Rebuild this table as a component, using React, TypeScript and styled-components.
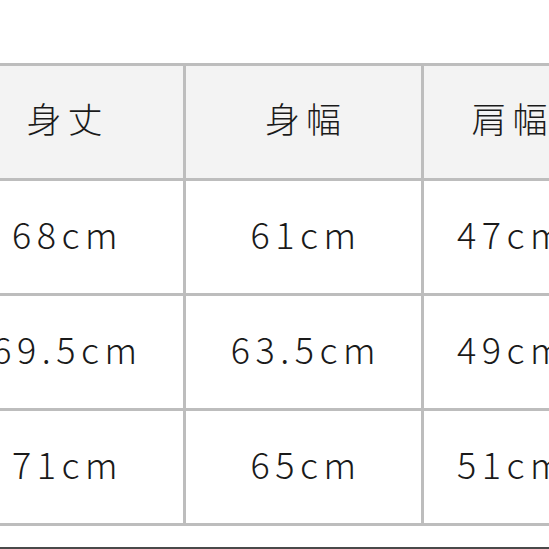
import styled, { createGlobalStyle } from "styled-components";

const GlobalStyle = createGlobalStyle`
  html, body {
    margin: 0;
    padding: 0;
    background: #ffffff;
    overflow: hidden;
  }
`;

const Page = styled.div`
  width: 549px;
  height: 549px;
  overflow: hidden;
  padding-top: 63px;
  box-sizing: border-box;
`;

// the table: grey background shows through the gaps as grid lines
const Table = styled.div`
  display: grid;
  grid-template-columns: 236px 235px 172px 235px;
  grid-auto-rows: 112px;
  gap: 3px;
  padding: 3px;
  background: #bdbdbd;
  width: max-content;
  margin-left: -56px;
`;

const Cell = styled.div<{ $head?: boolean }>`
  display: flex;
  align-items: center;
  justify-content: center;
  box-sizing: border-box;
  padding-bottom: ${(p) => (p.$head ? "10px" : "8px")};
  padding-left: ${(p) => (p.$head ? "5px" : "5px")};
  background: ${(p) => (p.$head ? "#f3f3f3" : "#ffffff")};
  color: #1a1a1a;
  font-family: "Noto Sans CJK JP", "Noto Sans", sans-serif;
  font-weight: 300;
  font-size: ${(p) => (p.$head ? "35px" : "36px")};
  letter-spacing: ${(p) => (p.$head ? "6px" : "5.5px")};
  white-space: nowrap;
`;

const BottomRule = styled.div`
  margin-top: 21px;
  height: 2px;
  background: #4a4a4a;
`;

const head = ["身丈", "身幅", "肩幅", "袖丈"];
const rows = [
  ["68cm", "61cm", "47cm", "60cm"],
  ["69.5cm", "63.5cm", "49cm", "61cm"],
  ["71cm", "65cm", "51cm", "62cm"],
];

export default function App() {
  return (
    <>
      <GlobalStyle />
      <Page>
        <Table>
          {head.map((h) => (
            <Cell $head key={h}>
              {h}
            </Cell>
          ))}
          {rows.map((r, i) =>
            r.map((v, j) => <Cell key={`${i}-${j}`}>{v}</Cell>)
          )}
        </Table>
        <BottomRule />
      </Page>
    </>
  );
}
